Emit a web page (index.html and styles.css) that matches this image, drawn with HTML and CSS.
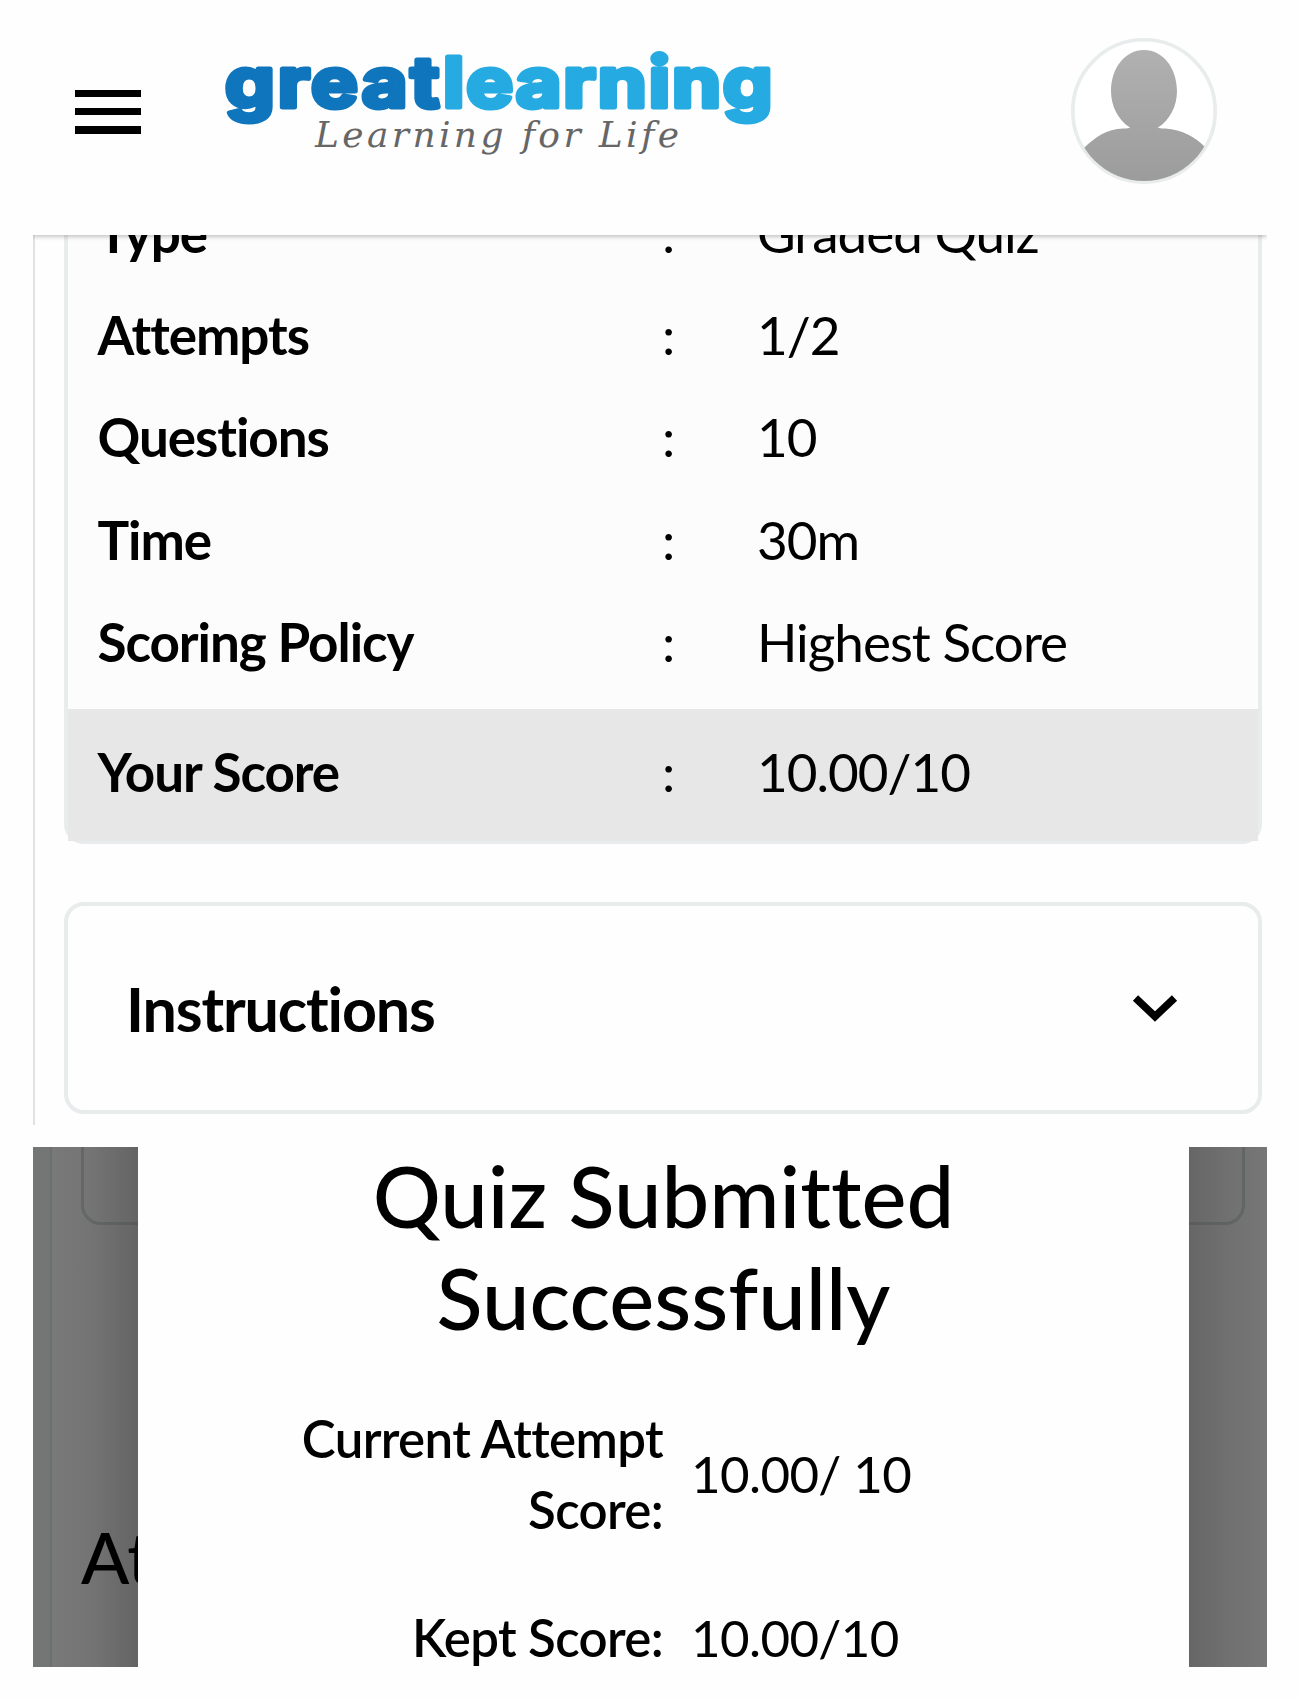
FILE: index.html
```html
<!DOCTYPE html>
<html lang="en">
<head>
<meta charset="utf-8">
<title>Great Learning - Quiz</title>
<link rel="stylesheet" href="styles.css">
</head>
<body>
<header class="topbar">
  <button class="menu" aria-label="Menu"><span></span><span></span><span></span></button>
  <svg class="logo" width="560" height="130" viewBox="220 40 560 130">
    <text class="logo-great" transform="translate(225 106.500) scale(1.140 1)" textLength="188">great</text>
    <text class="logo-learning" transform="translate(443 106.500) scale(1.140 1)" textLength="289">learning</text>
    <text class="logo-tag" x="315" y="147" textLength="364">Learning for Life</text>
  </svg>
  <svg class="avatar" width="146" height="146" viewBox="0 0 146 146">
    <defs>
      <linearGradient id="shade" gradientUnits="userSpaceOnUse" x1="0" y1="10" x2="0" y2="142"><stop offset="0" stop-color="#b1b1b1"/><stop offset="1" stop-color="#9c9c9c"/></linearGradient>
      <clipPath id="disc"><circle cx="73" cy="73" r="70"/></clipPath>
    </defs>
    <circle cx="73" cy="73" r="71.2" fill="#fff" stroke="#e8ecec" stroke-width="3.6"/>
    <path clip-path="url(#disc)" fill="url(#shade)" d="M73 12C92 12 106 30 106 53C106 68 99 82 87 89.500Q88 90.500 94 90.500C112 92 124 99 133 108V146H13V110C24 99 36 91 52 90.500Q58 90.500 59 89.500C47 82 40 68 40 53C40 30 54 12 73 12Z"/>
  </svg>
</header>

<main class="content">
  <section class="details">
    <div class="row"><b>Type</b><i>:</i><span>Graded Quiz</span></div>
    <div class="row"><b>Attempts</b><i>:</i><span>1/2</span></div>
    <div class="row"><b>Questions</b><i>:</i><span>10</span></div>
    <div class="row"><b>Time</b><i>:</i><span>30m</span></div>
    <div class="row"><b>Scoring Policy</b><i>:</i><span>Highest Score</span></div>
    <div class="row score"><b>Your Score</b><i>:</i><span>10.00/10</span></div>
  </section>
  <section class="instructions">
    <h2>Instructions</h2>
    <svg width="46" height="32" viewBox="0 0 46 32"><path d="M3.500 6L23 24.500L42.500 6" fill="none" stroke="#000" stroke-width="7.500"/></svg>
  </section>
</main>

<section class="result">
  <div class="backdrop-left"><div class="edge"></div><div class="corner corner-left"></div><p>At</p></div>
  <div class="modal">
    <h1>Quiz Submitted<br>Successfully</h1>
    <div class="scores">
      <div class="key">Current Attempt<br>Score:</div><div class="val">10.00/ 10</div>
      <div class="key kept">Kept Score:</div><div class="val kept">10.00/10</div>
    </div>
  </div>
  <div class="backdrop-right"><div class="corner corner-right"></div></div>
</section>
</body>
</html>
```
FILE: styles.css
```css
* { box-sizing: border-box; }
body {
  margin: 0;
  width: 1300px;
  height: 1700px;
  padding: 0 33px;
  overflow: hidden;
  background: #fefefe;
  color: #000;
  font-family: Lato, sans-serif;
  font-variant-ligatures: none;
}
h1, h2, p { margin: 0; }

.topbar {
  position: relative;
  z-index: 1;
  display: flex;
  height: 235px;
  padding-left: 42px;
  background: #fefefe;
  box-shadow: 0 2px 4px rgba(0, 0, 0, .22);
  clip-path: inset(0 0 -8px 0);
}
.menu {
  display: flex;
  flex-direction: column;
  gap: 10.700px;
  width: 66px;
  height: 45px;
  margin-top: 89.500px;
  padding: 0;
  border: 0;
  background: none;
}
.menu span { width: 66px; height: 7.600px; background: #000; }
.logo { margin: 40px 0 0 79px; }
.logo-great, .logo-learning {
  font: 700 69px Inter, sans-serif;
  stroke-width: 5px;
  stroke-linejoin: round;
}
.logo-great { fill: #0f75bc; stroke: #0f75bc; }
.logo-learning { fill: #25aae1; stroke: #25aae1; }
.logo-tag { font: italic 36px "DejaVu Serif", serif; fill: #666; }
.avatar { margin: 38px 0 0 291px; }

.content {
  height: 890px;
  padding: 0 5px 0 29px;
  border-left: 2px solid #dfe3e2;
  overflow: hidden;
}
.details {
  height: 662px;
  margin-top: -53px;
  border: 4px solid #e8ecec;
  border-top: 0;
  border-radius: 0 0 20px 20px;
  background: #fcfcfc;
}
.row {
  display: grid;
  grid-template-columns: 564.500px 95px 1fr;
  height: 102.200px;
  padding-left: 29.500px;
  font-size: 53px;
  line-height: 102.200px;
  letter-spacing: -1px;
}
.row b { font-weight: 700; letter-spacing: -1.050px; }
.row i { font-style: normal; }
.row.score {
  height: 132px;
  margin-top: 15.600px;
  padding-top: 12.500px;
  background: #e7e7e7;
}
.instructions {
  display: flex;
  justify-content: space-between;
  align-items: center;
  height: 212px;
  margin-top: 58px;
  padding: 0 80px 0 58px;
  border: 4px solid #e8ecec;
  border-radius: 20px;
}
.instructions h2 { font-size: 61px; font-weight: 700; letter-spacing: -1.150px; }

.result {
  display: flex;
  width: 1234px;
  height: 520px;
  margin-top: 22px;
}
.backdrop-left {
  position: relative;
  width: 105px;
  overflow: hidden;
  background: linear-gradient(90deg, #7b7b7b, #747474 55%, #646464);
}
.edge {
  position: absolute;
  inset: 0 auto 0 0;
  width: 19px;
  background: #727675;
  border-right: 2px solid #6c7070;
}
.corner { position: absolute; top: -20px; width: 100px; height: 98px; border: 3px solid rgba(50, 65, 62, .25); }
.corner-left { left: 48px; border-radius: 20px; }
.corner-right { right: 22px; border-radius: 20px; }
.backdrop-left p { padding: 365px 0 0 48px; font-size: 71px; font-weight: 500; line-height: 90px; white-space: nowrap; }
.modal { width: 1051px; background: #fefefe; }
.backdrop-right {
  position: relative;
  flex: 1;
  overflow: hidden;
  background: linear-gradient(90deg, #666, #707070 50%, #777);
}
.modal h1 { margin-top: -2px; font-size: 85px; font-weight: 500; line-height: 101.500px; text-align: center; }
.scores {
  display: grid;
  grid-template-columns: 525px 1fr;
  column-gap: 28px;
  align-items: center;
  margin-top: 54.500px;
  font-size: 51px;
  line-height: 71px;
  letter-spacing: -.6px;
}
.key { text-align: right; font-weight: 600; letter-spacing: -.650px; }
.kept { margin-top: 57px; }
```
